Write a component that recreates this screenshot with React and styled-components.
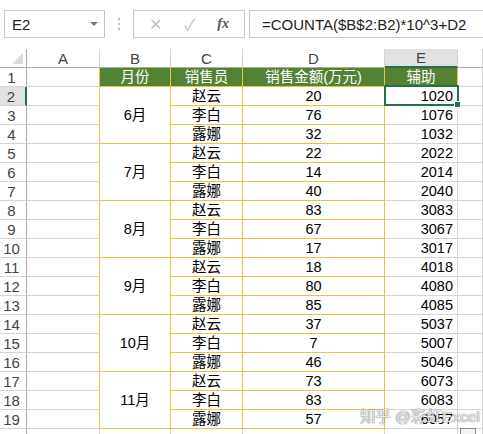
import React from "react";
import styled, { createGlobalStyle } from "styled-components";

const GRID = "#D4D4D4";
const GOLD = "#EEC23C";
const GREEN = "#548235";
const SEL = "#217346";

const GlobalStyle = createGlobalStyle`
  html, body {
    margin: 0;
    padding: 0;
    background: #fff;
    overflow: hidden;
  }
  body {
    font-family: "Liberation Sans", "Noto Sans CJK SC", Arial, sans-serif;
  }
`;

const data = [
  { month: "6月", rows: [["赵云", 20, 1020], ["李白", 76, 1076], ["露娜", 32, 1032]] },
  { month: "7月", rows: [["赵云", 22, 2022], ["李白", 14, 2014], ["露娜", 40, 2040]] },
  { month: "8月", rows: [["赵云", 83, 3083], ["李白", 67, 3067], ["露娜", 17, 3017]] },
  { month: "9月", rows: [["赵云", 18, 4018], ["李白", 80, 4080], ["露娜", 85, 4085]] },
  { month: "10月", rows: [["赵云", 37, 5037], ["李白", 7, 5007], ["露娜", 46, 5046]] },
  { month: "11月", rows: [["赵云", 73, 6073], ["李白", 83, 6083], ["露娜", 57, 6057]] }
];

const Page = styled.div`
  width: 483px;
  height: 434px;
  overflow: hidden;
  position: relative;
  background: #fff;
`;

const FormulaBar = styled.div`
  display: flex;
  align-items: center;
  height: 49px;
  padding: 0 0 1px 4px;
  box-sizing: border-box;
`;

const NameBox = styled.div`
  width: 101px;
  height: 28px;
  box-sizing: border-box;
  border: 1px solid #c6c6c6;
  display: flex;
  align-items: center;
  justify-content: space-between;
  padding: 0 6px 0 7px;
  font-size: 15px;
  color: #222;
`;

const Caret = styled.span`
  width: 0;
  height: 0;
  border-left: 4px solid transparent;
  border-right: 4px solid transparent;
  border-top: 4px solid #777;
`;

const Dots = styled.div`
  width: 28px;
  display: flex;
  flex-direction: column;
  align-items: center;
  gap: 3px;
  span {
    width: 2px;
    height: 2px;
    background: #b5b5b5;
  }
`;

const FnBox = styled.div`
  width: 112px;
  height: 28px;
  box-sizing: border-box;
  border: 1px solid #c6c6c6;
  display: flex;
  align-items: center;
  justify-content: space-around;
  padding: 0 4px;
  color: #c4c4c4;
  font-size: 16px;
`;

const Fx = styled.span`
  font-family: "Liberation Serif", serif;
  font-style: italic;
  font-weight: bold;
  font-size: 14px;
  color: #555;
`;

const FormulaInput = styled.div`
  flex: 1;
  margin-left: 4px;
  height: 28px;
  box-sizing: border-box;
  border: 1px solid #c6c6c6;
  border-right: none;
  display: flex;
  align-items: center;
  padding-left: 12px;
  font-size: 15px;
  color: #222;
  white-space: nowrap;
`;

const Sheet = styled.div`
  display: grid;
  grid-template-columns: 27px 73px 71px 72px 142px 73px 1fr;
  grid-template-rows: 19px repeat(20, 19px);
  position: relative;
`;

const Cell = styled.div`
  box-sizing: border-box;
  border-right: 1px solid ${(p) => p.$right || GRID};
  border-bottom: 1px solid ${(p) => p.$bottom || GRID};
  background: ${(p) => p.$bg || "#fff"};
  color: ${(p) => p.$color || "#000"};
  font-size: 14.5px;
  line-height: 18px;
  display: flex;
  align-items: center;
  justify-content: ${(p) => p.$align || "center"};
  padding-right: ${(p) => (p.$align === "flex-end" ? "4px" : "0")};
  white-space: nowrap;
  overflow: hidden;
  grid-row: ${(p) => (p.$span ? `span ${p.$span}` : "auto")};
`;

const ColHead = styled.div`
  box-sizing: border-box;
  border-right: 1px solid ${GRID};
  border-bottom: ${(p) => (p.$active ? `2px solid ${SEL}` : "1px solid #ababab")};
  background: ${(p) => (p.$active ? "#e1e1e1" : "#fff")};
  color: #444;
  font-size: 15px;
  display: flex;
  align-items: center;
  justify-content: center;
`;

const Corner = styled.div`
  box-sizing: border-box;
  border-right: 1px solid #ababab;
  border-bottom: 1px solid #ababab;
  position: relative;
  &::after {
    content: "";
    position: absolute;
    right: 3px;
    bottom: 3px;
    width: 0;
    height: 0;
    border-left: 11px solid transparent;
    border-bottom: 11px solid #dcdcdc;
  }
`;

const RowHead = styled.div`
  box-sizing: border-box;
  border-right: ${(p) => (p.$active ? `2px solid ${SEL}` : "1px solid #ababab")};
  border-bottom: 1px solid ${GRID};
  background: ${(p) => (p.$active ? "#e1e1e1" : "#fff")};
  color: #444;
  font-size: 15px;
  display: flex;
  align-items: center;
  justify-content: center;
  padding-right: 3px;
`;

const Selection = styled.div`
  position: absolute;
  left: 384px;
  top: 36px;
  width: 75px;
  height: 21px;
  box-sizing: border-box;
  border: 2px solid ${SEL};
  pointer-events: none;
  &::after {
    content: "";
    position: absolute;
    right: -4px;
    bottom: -4px;
    width: 5px;
    height: 5px;
    background: ${SEL};
    border: 1px solid #fff;
  }
`;

const Watermark = styled.div`
  position: absolute;
  left: 360px;
  top: 404px;
  font-size: 15.5px;
  color: rgba(255, 255, 255, 0.85);
  text-shadow: 0 0 1px #777, 0 0 1px #777;
  white-space: nowrap;
`;

const QuickBtn = styled.div`
  position: absolute;
  left: 460px;
  top: 428px;
  width: 16px;
  height: 10px;
  box-sizing: border-box;
  border: 1px solid #888;
  background: #f4f4f4;
`;

export default function App() {
  const rows = [];
  let n = 2;
  data.forEach((group) => {
    group.rows.forEach(([name, amount, helper], i) => {
      const rowNo = n++;
      rows.push(<RowHead key={`h${rowNo}`} $active={rowNo === 2}>{rowNo}</RowHead>);
      rows.push(<Cell key={`a${rowNo}`} $right={GOLD} />);
      if (i === 0) {
        rows.push(
          <Cell key={`b${rowNo}`} $span={3} $right={GOLD} $bottom={GOLD}>
            {group.month}
          </Cell>
        );
      }
      rows.push(<Cell key={`c${rowNo}`} $right={GOLD} $bottom={GOLD}>{name}</Cell>);
      rows.push(<Cell key={`d${rowNo}`} $right={GOLD} $bottom={GOLD}>{amount}</Cell>);
      rows.push(<Cell key={`e${rowNo}`} $align="flex-end">{helper}</Cell>);
      rows.push(<Cell key={`f${rowNo}`} />);
    });
  });

  return (
    <Page>
      <GlobalStyle />
      <FormulaBar>
        <NameBox>
          E2
          <Caret />
        </NameBox>
        <Dots>
          <span />
          <span />
          <span />
        </Dots>
        <FnBox>
          <span>✕</span>
          <span>✓</span>
          <Fx>fx</Fx>
        </FnBox>
        <FormulaInput>=COUNTA($B$2:B2)*10^3+D2</FormulaInput>
      </FormulaBar>
      <Sheet>
        <Corner />
        <ColHead>A</ColHead>
        <ColHead>B</ColHead>
        <ColHead>C</ColHead>
        <ColHead>D</ColHead>
        <ColHead $active>E</ColHead>
        <ColHead />

        <RowHead>1</RowHead>
        <Cell $right={GOLD} />
        <Cell $bg={GREEN} $color="#fff" $right={GOLD} $bottom={GOLD}>月份</Cell>
        <Cell $bg={GREEN} $color="#fff" $right={GOLD} $bottom={GOLD}>销售员</Cell>
        <Cell $bg={GREEN} $color="#fff" $right={GOLD} $bottom={GOLD}>销售金额(万元)</Cell>
        <Cell $bg={GREEN} $color="#fff" $right={GOLD} $bottom={GOLD}>辅助</Cell>
        <Cell />

        {rows}

        <RowHead />
        <Cell />
        <Cell />
        <Cell />
        <Cell />
        <Cell />
        <Cell />
        <Selection />
      </Sheet>
      <Watermark>知乎 @彩虹Excel</Watermark>
      <QuickBtn />
    </Page>
  );
}
